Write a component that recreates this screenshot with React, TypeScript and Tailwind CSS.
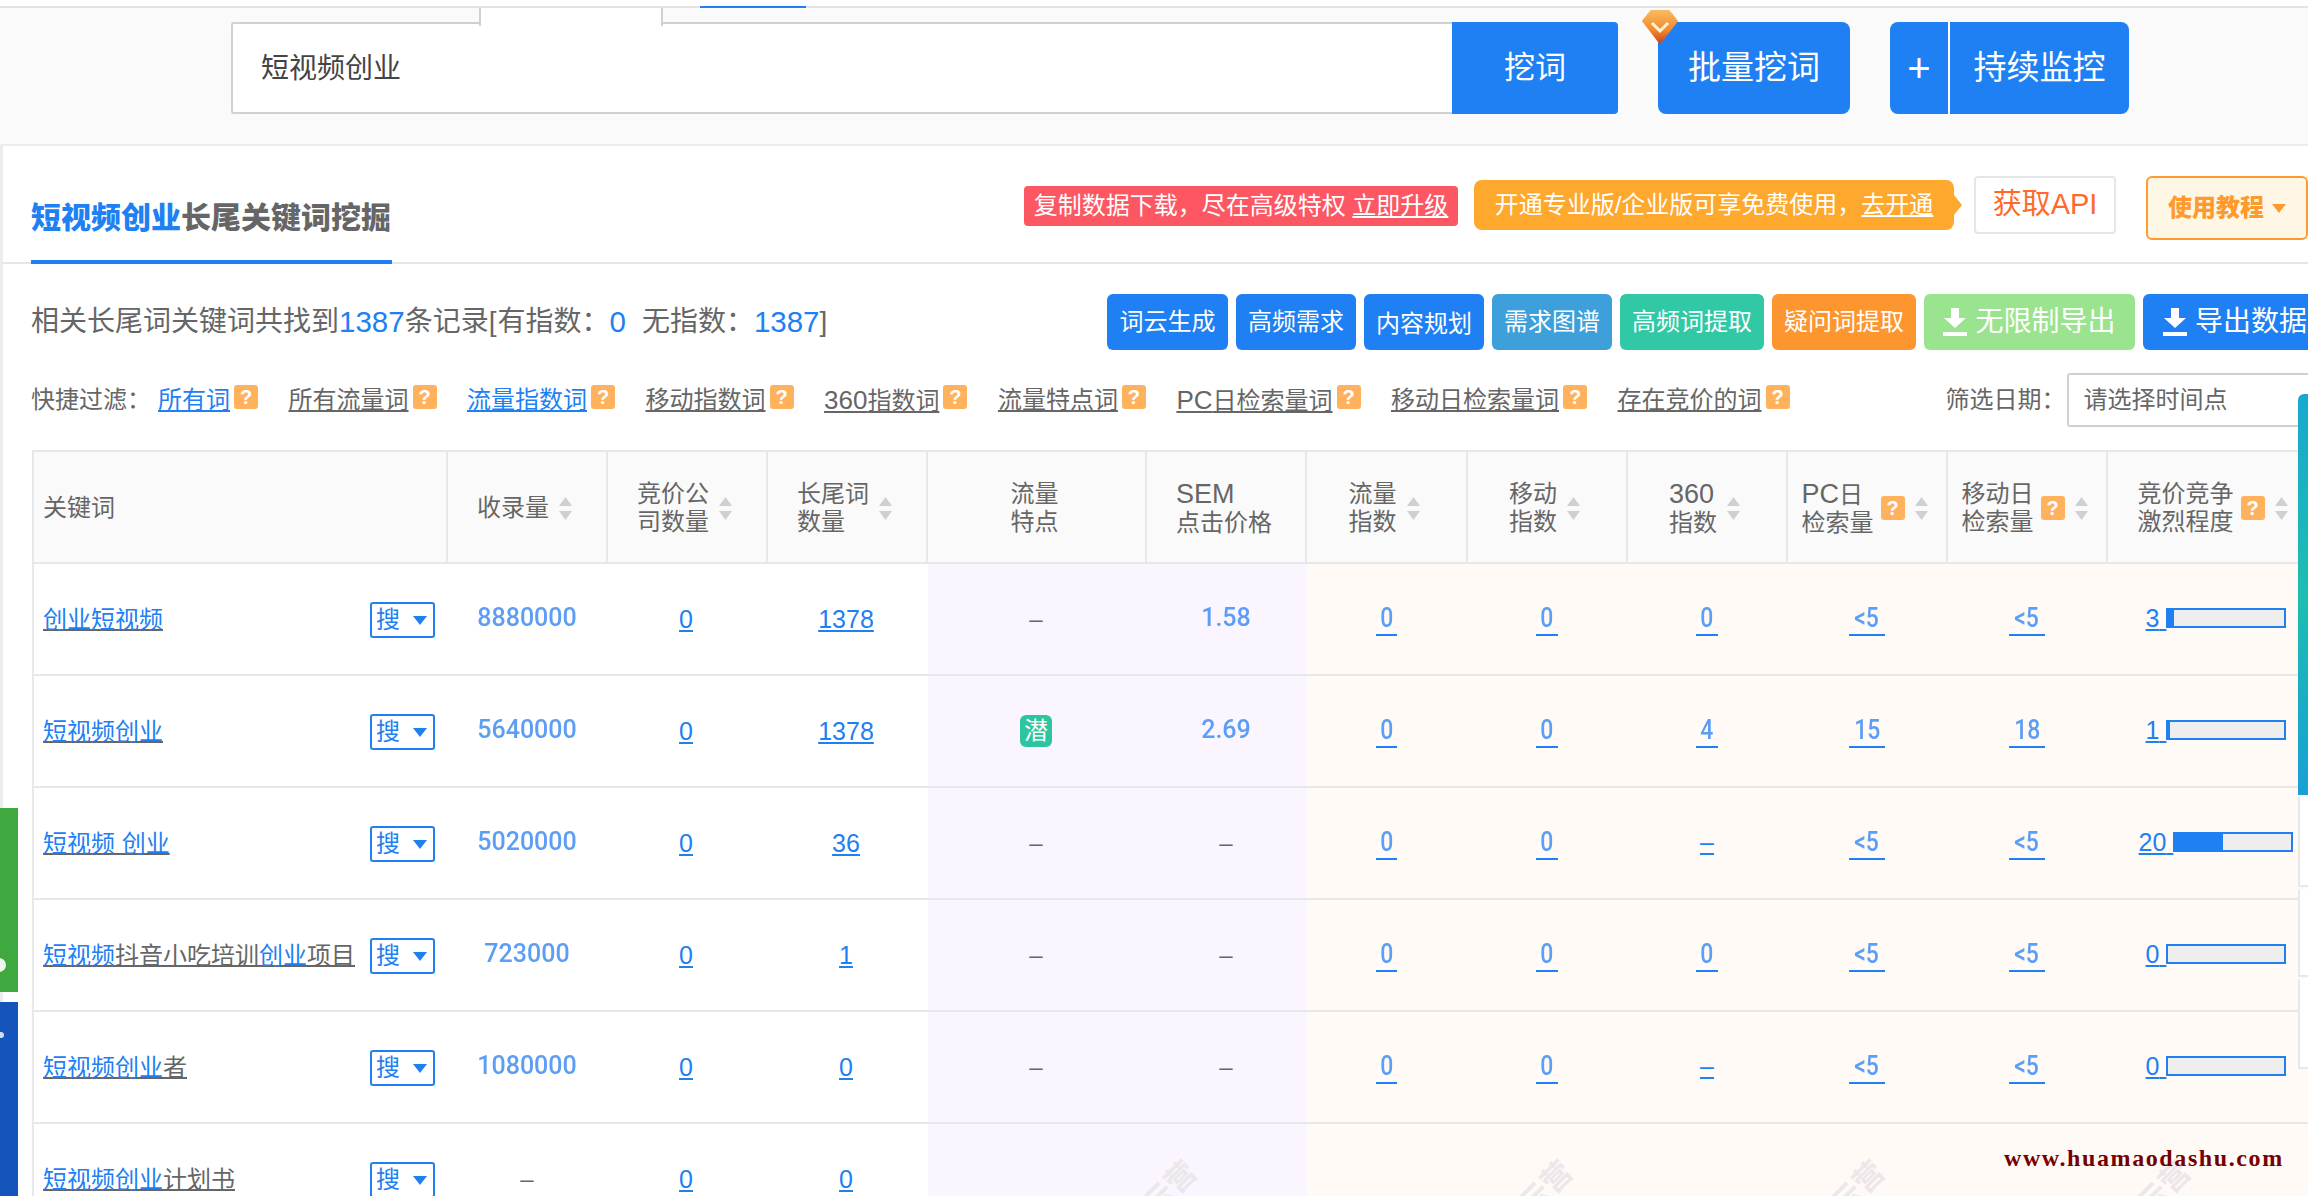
import React from "react";

const qBadge = "flex h-6 w-6 shrink-0 items-center justify-center rounded-[3px] bg-[#ffb25e] text-[20px] font-bold text-white";

const Question = () => <span className={qBadge}>?</span>;

const Sort = () => (
  <svg width="15" height="23" viewBox="0 0 15 23" className="shrink-0">
    <path d="M7.5 0 L14 9 L1 9 Z" fill="#d0d0d0" />
    <path d="M1 14 L14 14 L7.5 23 Z" fill="#d0d0d0" />
  </svg>
);

const Caret = () => (
  <svg width="14" height="9" viewBox="0 0 14 9">
    <path d="M0 0 L14 0 L7 9 Z" fill="currentColor" />
  </svg>
);

const Diamond = () => (
  <svg width="36" height="34" viewBox="0 0 36 34" className="absolute -left-[16px] -top-[12px]">
    <defs>
      <linearGradient id="gem" x1="0" y1="0" x2="0" y2="1">
        <stop offset="0" stopColor="#f9b95c" />
        <stop offset="0.6" stopColor="#f08a2c" />
        <stop offset="1" stopColor="#c8451f" />
      </linearGradient>
    </defs>
    <path d="M9 1 L27 1 L35 11 L18 33 L1 11 Z" fill="url(#gem)" stroke="url(#gem)" strokeWidth="2" strokeLinejoin="round" />
    <path d="M10 13 L18 21 L26 13" fill="none" stroke="#fff3d6" strokeWidth="3" />
  </svg>
);

// latin runs sit a bit larger than the cjk around them
const Mix = ({ text, cls }: { text: string; cls: string }) => (
  <>
    {text.split(/([A-Za-z0-9]+)/).map((s, i) =>
      /^[A-Za-z0-9]+$/.test(s) ? (
        <span key={i} className={cls}>{s}</span>
      ) : (
        <span key={i}>{s}</span>
      )
    )}
  </>
);

const filters = [
  { label: "所有词", on: true },
  { label: "所有流量词" },
  { label: "流量指数词", on: true },
  { label: "移动指数词" },
  { label: "360指数词" },
  { label: "流量特点词" },
  { label: "PC日检索量词" },
  { label: "移动日检索量词" },
  { label: "存在竞价的词" },
];

const actions = [
  { label: "词云生成", cls: "w-[121px] bg-[#1e80f3]" },
  { label: "高频需求", cls: "w-[120px] bg-[#1e80f3]" },
  { label: "内容规划", cls: "w-[120px] bg-[#1e80f3] pt-[3px]" },
  { label: "需求图谱", cls: "w-[120px] bg-[#3ea0da]" },
  { label: "高频词提取", cls: "w-[144px] bg-[#31c9a5]" },
  { label: "疑问词提取", cls: "w-[144px] bg-[#fd962f]" },
];

type Row = {
  kw: [string, boolean][];
  shoulu: string;
  jingjia: string;
  changwei: string;
  feature?: string;
  sem?: string;
  idx?: string[];
  comp?: string;
  fill?: number;
};

const rows: Row[] = [
  { kw: [["创业短视频", true]], shoulu: "8880000", jingjia: "0", changwei: "1378", feature: "–", sem: "1.58", idx: ["0", "0", "0", "<5", "<5"], comp: "3", fill: 6 },
  { kw: [["短视频创业", true]], shoulu: "5640000", jingjia: "0", changwei: "1378", feature: "潜", sem: "2.69", idx: ["0", "0", "4", "15", "18"], comp: "1", fill: 2 },
  { kw: [["短视频 创业", true]], shoulu: "5020000", jingjia: "0", changwei: "36", feature: "–", sem: "–", idx: ["0", "0", "–", "<5", "<5"], comp: "20", fill: 48 },
  { kw: [["短视频", true], ["抖音小吃培训", false], ["创业", true], ["项目", false]], shoulu: "723000", jingjia: "0", changwei: "1", feature: "–", sem: "–", idx: ["0", "0", "0", "<5", "<5"], comp: "0", fill: 0 },
  { kw: [["短视频创业", true], ["者", false]], shoulu: "1080000", jingjia: "0", changwei: "0", feature: "–", sem: "–", idx: ["0", "0", "–", "<5", "<5"], comp: "0", fill: 0 },
  { kw: [["短视频创业", true], ["计划书", false]], shoulu: "–", jingjia: "0", changwei: "0" },
];

const colWidths = ["w-[416px]", "w-[160px]", "w-[160px]", "w-[160px]", "w-[219px]", "w-[160px]", "w-[161px]", "w-[160px]", "w-[160px]", "w-[160px]", "w-[160px]", "w-[216px]"];

const thCls = "border-t-2 border-b-2 border-r-2 border-[#e8e8e8] bg-[#fafafa] p-0 font-normal";
const tdCls = "border-b-2 border-[#e8e8e8] p-0 text-center";
const linkCls = "text-[#1e80f3] underline text-[25px]";
const softNum = "[font-family:Roboto,sans-serif] font-medium text-[25px] text-[#5d9ef5] blur-[0.5px]";

const Head = ({ lines, q, sort = true }: { lines: string[]; q?: boolean; sort?: boolean }) => (
  <th className={thCls}>
    <div className="flex items-center justify-center pr-[4px] pt-[2px] text-[24px] leading-[28px]">
      <div className="text-left">
        {lines.map((l) => (
          <div key={l}>
            <Mix text={l} cls="text-[27px]" />
          </div>
        ))}
      </div>
      {q && <span className="ml-[7px]"><Question /></span>}
      {sort && <span className="ml-[9px] flex"><Sort /></span>}
    </div>
  </th>
);

const IndexCell = ({ v }: { v?: string }) => (
  <td className={`${tdCls} bg-[#fffaf6] pr-[2px]`}>
    {v === "–" ? (
      <a className={linkCls}>–</a>
    ) : v ? (
      <span className="mt-[4px] inline-block border-b-2 border-[#1e80f3] px-[3px] pb-[3px] leading-[25px]">
        <span className="inline-block origin-center scale-x-[0.85] [font-family:Roboto,sans-serif] text-[27px] font-medium text-[#5d9ef5] blur-[0.5px]">{v}</span>
      </span>
    ) : null}
  </td>
);

export default function App() {
  return (
    <div className="relative h-[1196px] w-[2308px] overflow-hidden bg-white text-[#666] [font-family:'Liberation_Sans','Noto_Sans_CJK_SC',sans-serif]">
      {/* top nav edge */}
      <div className="h-[6px] bg-white" />
      <div className="h-[2px] bg-[#e4e4e4]">
        <div className="ml-[700px] h-full w-[106px] bg-[#1e80f3]" />
      </div>

      {/* search */}
      <div className="flex h-[136px] bg-[#fafafa] pl-[231px] pt-[14px]">
        <div className="relative flex h-[92px] w-[1221px] items-center rounded-l-[3px] border-2 border-r-0 border-[#d0d0d0] bg-white pl-[28px] pt-[2px] text-[28px] text-[#444]">
          短视频创业
          <div className="absolute -top-[16px] left-[246px] h-[18px] w-[184px] border-x-2 border-[#d0d0d0] bg-white" />
        </div>
        <button className="h-[92px] w-[166px] rounded-r-[4px] bg-[#1e80f3] text-[31px] text-white">挖词</button>
        <button className="relative ml-[40px] h-[92px] w-[192px] rounded-[8px] bg-[#1e80f3] text-[33px] text-white">
          批量挖词
          <Diamond />
        </button>
        <div className="ml-[40px] flex h-[92px] w-[239px] overflow-hidden rounded-[8px] bg-[#1e80f3] text-white">
          <div className="flex w-[60px] items-center justify-center border-r-2 border-white text-[40px]">+</div>
          <div className="flex flex-1 items-center justify-center text-[33px]">持续监控</div>
        </div>
      </div>

      {/* main panel */}
      <div className="border-l-[3px] border-t-2 border-[#ececec]">
        {/* title row */}
        <div className="flex h-[118px] items-start border-b-2 border-[#e6e6e6] pl-[28px]">
          <div className="h-[118px] w-[361px] border-b-4 border-[#1e80f3] pt-[53px] text-[30px] font-black leading-[38px]">
            <span className="text-[#1e80f3]">短视频创业</span>长尾关键词挖掘
          </div>
          <div className="ml-[632px] mt-[40px] flex h-[40px] w-[434px] items-center justify-center whitespace-nowrap rounded-[4px] bg-[#fc5763] text-[24px] text-white">
            复制数据下载，尽在高级特权&nbsp;<span className="underline">立即升级</span>
          </div>
          <div className="relative ml-[16px] mt-[34px] flex h-[50px] w-[480px] items-center justify-center whitespace-nowrap rounded-[8px] bg-[#ffa82e] text-[24px] text-white">
            开通专业版/企业版可享免费使用，<span className="underline">去开通</span>
            <span className="absolute -right-[8px] top-[15px] h-0 w-0 border-y-[10px] border-l-[8px] border-y-transparent border-l-[#ffa82e]" />
          </div>
          <div className="ml-[20px] mt-[30px] flex h-[58px] w-[142px] items-center justify-center rounded-[4px] border-2 border-[#e6e6e6] text-[29px] text-[#ff6a2b]">
            获取API
          </div>
          <div className="ml-[30px] mt-[30px] flex h-[64px] w-[162px] shrink-0 items-center justify-center gap-[8px] rounded-[6px] border-2 border-[#ff9a2e] bg-[#fff7e6] text-[24px] font-black text-[#ff9a2e]">
            使用教程
            <Caret />
          </div>
        </div>

        {/* stats + actions */}
        <div className="flex h-[86px] items-end pl-[28px]">
          <div className="flex h-[56px] w-[1076px] shrink-0 items-center whitespace-nowrap text-[28px]">
            相关长尾词关键词共找到<span className="text-[29.5px] text-[#1e80f3]">1387</span>条记录[<span className="ml-[1px]">有指数：</span>
            <span className="mr-[16px] text-[29.5px] text-[#1e80f3]">0</span>无指数：<span className="text-[29.5px] text-[#1e80f3]">1387</span>]
          </div>
          <div className="flex shrink-0 gap-[8px]">
            {actions.map((a) => (
              <button key={a.label} className={`h-[56px] rounded-[6px] text-[24px] text-white ${a.cls}`}>
                {a.label}
              </button>
            ))}
            <button className="flex h-[56px] w-[211px] items-center justify-center gap-[8px] rounded-[6px] bg-[#9ae38f] text-[28px] text-white">
              <DownloadIcon />
              无限制导出
            </button>
            <button className="flex h-[56px] w-[178px] shrink-0 items-center gap-[8px] whitespace-nowrap rounded-[6px] bg-[#1e80f3] pl-[20px] text-[28px] text-white">
              <DownloadIcon />
              导出数据
            </button>
          </div>
        </div>

        {/* quick filters */}
        <div className="flex h-[100px] items-center pl-[28px] text-[24px]">
          <span className="w-[127px] shrink-0">快捷过滤：</span>
          <div className="flex gap-[30.5px]">
            {filters.map((f) => (
              <span key={f.label} className="flex shrink-0 items-center gap-[4px] whitespace-nowrap">
                <a className={f.on ? "text-[#1e80f3] underline" : "underline"}>
                  <Mix text={f.label} cls="text-[26px]" />
                </a>
                <span className="-mt-[6px]"><Question /></span>
              </span>
            ))}
          </div>
          <div className="ml-[156px] flex shrink-0 items-center">
            <span className="w-[121px]">筛选日期：</span>
            <div className="flex h-[54px] w-[250px] shrink-0 items-center rounded-[3px] border-2 border-[#d0d0d0] pl-[15px]">
              请选择时间点
            </div>
          </div>
        </div>

        {/* table */}
        <div className="pl-[29px]">
          <table className="w-[2292px] table-fixed border-separate border-spacing-0">
            <colgroup>
              {colWidths.map((w, i) => (
                <col key={i} className={w} />
              ))}
            </colgroup>
            <thead>
              <tr className="h-[114px]">
                <th className={`${thCls} border-l-2 pl-[9px] pt-[2px] text-left text-[24px]`}>关键词</th>
                <Head lines={["收录量"]} />
                <Head lines={["竞价公", "司数量"]} />
                <Head lines={["长尾词", "数量"]} />
                <Head lines={["流量", "特点"]} sort={false} />
                <Head lines={["SEM", "点击价格"]} sort={false} />
                <Head lines={["流量", "指数"]} />
                <Head lines={["移动", "指数"]} />
                <Head lines={["360", "指数"]} />
                <Head lines={["PC日", "检索量"]} q />
                <Head lines={["移动日", "检索量"]} q />
                <Head lines={["竞价竞争", "激烈程度"]} q />
              </tr>
            </thead>
            <tbody className="text-[24px]">
              {rows.map((r, i) => (
                <tr key={i} className="h-[112px]">
                  <td className={`${tdCls} border-l-2 pt-[2px] text-left`}>
                    <div className="flex items-center pl-[9px]">
                      <a className="w-[327px] shrink-0 whitespace-pre underline decoration-2">
                        {r.kw.map(([t, hl], j) => (
                          <span key={j} className={hl ? "text-[#1e80f3]" : ""}>{t}</span>
                        ))}
                      </a>
                      <button className="flex h-[36px] w-[65px] items-center justify-between rounded-[3px] border-2 border-[#1e80f3] pl-[4px] pr-[6px] text-[24px] leading-none text-[#1e80f3]">
                        搜
                        <Caret />
                      </button>
                    </div>
                  </td>
                  <td className={`${tdCls} pr-[2px]`}>
                    {r.shoulu === "–" ? <span>–</span> : <span className={`${softNum} relative -top-[1px]`}>{r.shoulu}</span>}
                  </td>
                  <td className={`${tdCls} pr-[4px] pt-[2px]`}><a className={linkCls}>{r.jingjia}</a></td>
                  <td className={`${tdCls} pr-[4px] pt-[2px]`}><a className={linkCls}>{r.changwei}</a></td>
                  <td className={`${tdCls} bg-[#faf5ff] pr-[3px] font-medium`}>
                    {r.feature === "潜" ? (
                      <span className="inline-flex h-8 w-8 items-center justify-center rounded-[6px] bg-[#2dc5a0] font-normal text-white">潜</span>
                    ) : (
                      r.feature
                    )}
                  </td>
                  <td className={`${tdCls} bg-[#faf5ff] pr-[2px] font-medium`}>
                    {r.sem && r.sem !== "–" ? <span className={`${softNum} relative -top-[1px]`}>{r.sem}</span> : r.sem}
                  </td>
                  {[0, 1, 2, 3, 4].map((k) => (
                    <IndexCell key={k} v={r.idx?.[k]} />
                  ))}
                  <td className={`${tdCls} bg-[#fffaf6]`}>
                    {r.comp && (
                      <div className="flex items-center justify-center">
                        <a className={`${linkCls} whitespace-pre`}>{r.comp} </a>
                        <div className="-mt-[2px] h-[20px] w-[120px] border-2 border-[#1e80f3] bg-[#eeeeee]">
                          <div className="h-full bg-[#1e80f3]" style={{ width: r.fill }} />
                        </div>
                      </div>
                    )}
                  </td>
                </tr>
              ))}
            </tbody>
          </table>
        </div>
      </div>

      {/* floating edge widgets */}
      <div className="absolute left-0 top-[808px] flex h-[184px] w-[18px] items-end overflow-hidden bg-[#3fa93f] pb-[20px]">
        <span className="-ml-[8px] h-[14px] w-[14px] rounded-full bg-white/90" />
      </div>
      <div className="absolute left-0 top-[1002px] h-[194px] w-[18px] overflow-hidden bg-[#1554bb] pt-[30px]">
        <span className="-ml-[4px] block h-[6px] w-[8px] rounded-full bg-white/80" />
      </div>
      <div className="absolute right-0 top-[394px] h-[401px] w-[10px] rounded-tl-[6px] bg-gradient-to-b from-[#19a8d0] via-[#1fbdb0] to-[#1a9fd6]" />
      <div className="absolute right-0 top-[797px] h-[90px] w-[10px] border-b-2 border-l-2 border-[#e8e8e8] bg-white" />
      <div className="absolute right-0 top-[889px] h-[88px] w-[10px] border-b-2 border-l-2 border-[#e8e8e8] bg-white" />
      <div className="absolute right-0 top-[979px] h-[90px] w-[10px] border-b-2 border-l-2 border-[#e8e8e8] bg-white" />

      {/* table watermark */}
      {["left-[1140px]", "left-[1516px]", "left-[1828px]", "left-[2134px]"].map((p) => (
        <span key={p} className={`absolute top-[1165px] -rotate-45 text-[30px] font-bold text-[#ebe7ea] ${p}`}>
          云营
        </span>
      ))}
      <span className="absolute left-[2004px] top-[1144px] whitespace-nowrap text-[24px] font-bold leading-[28px] tracking-[1.6px] text-[#760000] [font-family:'Liberation_Serif',serif]">
        www.huamaodashu.com
      </span>
    </div>
  );
}

function DownloadIcon() {
  return (
    <svg width="24" height="28" viewBox="0 0 24 28" className="shrink-0">
      <path d="M8 0 H16 V10 H23 L12 20 L1 10 H8 Z" fill="#fff" />
      <rect x="0" y="24" width="24" height="4" fill="#fff" />
    </svg>
  );
}
